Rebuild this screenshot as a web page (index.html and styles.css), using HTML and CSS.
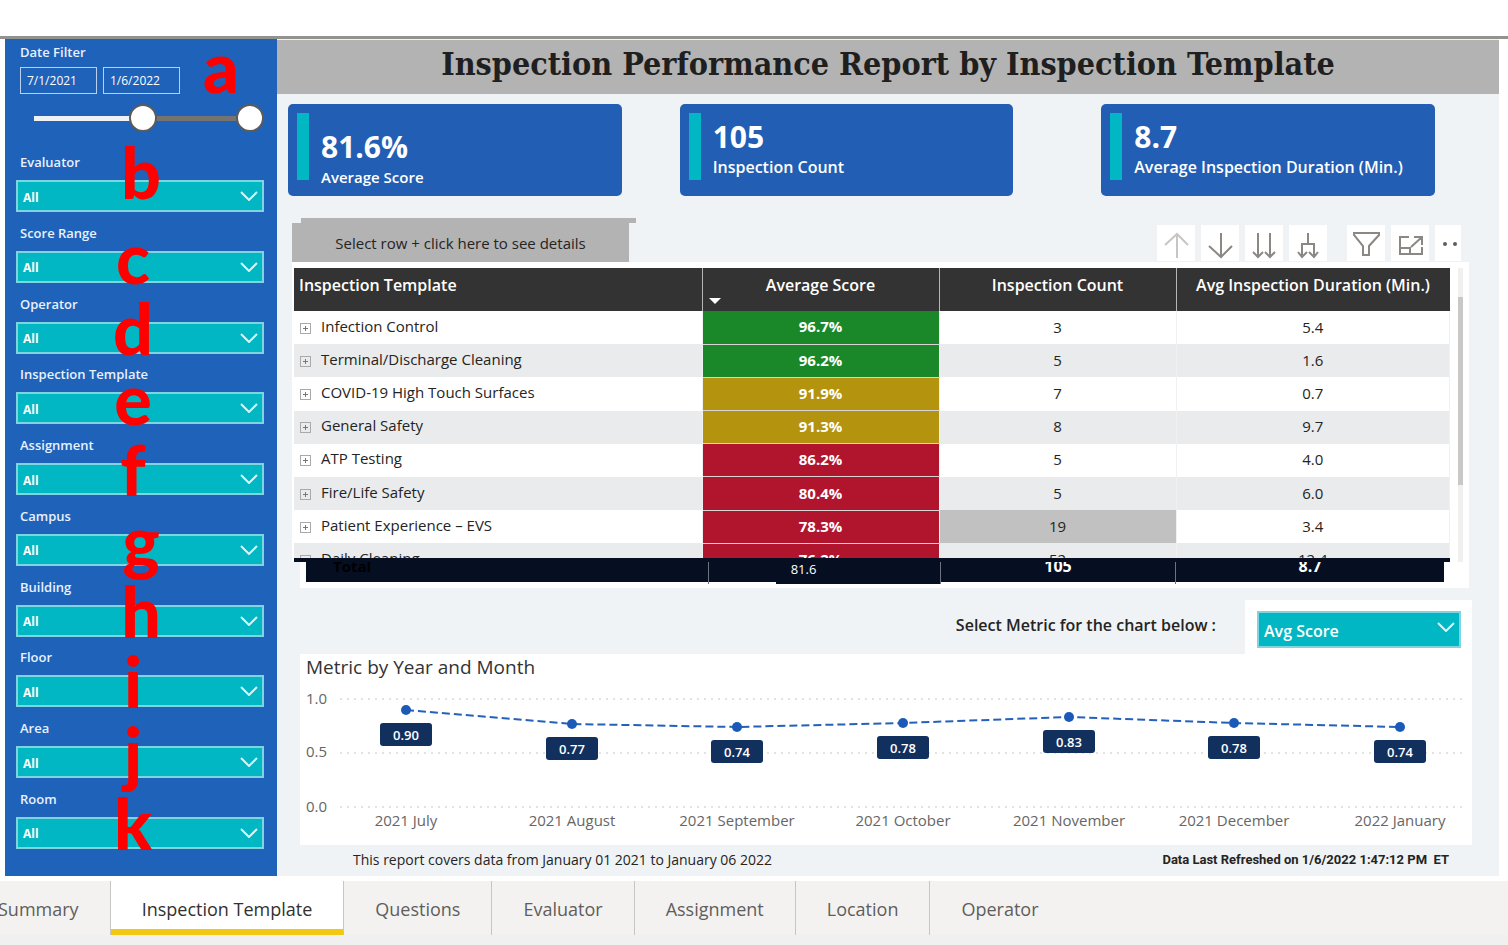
FILE: index.html
```html
<!DOCTYPE html>
<html lang="en">
<head>
  <meta charset="UTF-8" />
  <meta name="viewport" content="width=device-width, initial-scale=1.0" />
  <title>Inspection Performance Report</title>
  <link rel="stylesheet" href="styles.css">
</head>
<body>
  <div class="report">
    <aside class="sidebar">
      <div class="date-filter">
        <label class="filter-label" for="dateFrom">Date Filter</label>
        <div class="dates">
          <input type="text" id="dateFrom" value="7/1/2021" />
          <input type="text" id="dateTo" aria-label="End date" value="1/6/2022" />
        </div>
        <div class="slider">
          <div class="slider-line"></div>
          <input type="range" aria-label="Start of range" min="0" max="100" value="50" />
          <input type="range" aria-label="End of range" min="0" max="100" value="100" />
        </div>
        <span class="marker marker-date">a</span>
      </div>

      <div class="filters">
        <div class="filter">
          <label class="filter-label" for="evaluator">Evaluator</label>
          <div class="select">
            <select id="evaluator"><option>All</option></select>
            <svg class="chevron" viewBox="0 0 18 10"><path d="M1 1l8 8 8-8" /></svg>
          </div>
          <span class="marker marker-right marker-high">b</span>
        </div>
        <div class="filter">
          <label class="filter-label" for="scoreRange">Score Range</label>
          <div class="select">
            <select id="scoreRange"><option>All</option></select>
            <svg class="chevron" viewBox="0 0 18 10"><path d="M1 1l8 8 8-8" /></svg>
          </div>
          <span class="marker">c</span>
        </div>
        <div class="filter">
          <label class="filter-label" for="operator">Operator</label>
          <div class="select">
            <select id="operator"><option>All</option></select>
            <svg class="chevron" viewBox="0 0 18 10"><path d="M1 1l8 8 8-8" /></svg>
          </div>
          <span class="marker">d</span>
        </div>
        <div class="filter">
          <label class="filter-label" for="template">Inspection Template</label>
          <div class="select">
            <select id="template"><option>All</option></select>
            <svg class="chevron" viewBox="0 0 18 10"><path d="M1 1l8 8 8-8" /></svg>
          </div>
          <span class="marker">e</span>
        </div>
        <div class="filter">
          <label class="filter-label" for="assignment">Assignment</label>
          <div class="select">
            <select id="assignment"><option>All</option></select>
            <svg class="chevron" viewBox="0 0 18 10"><path d="M1 1l8 8 8-8" /></svg>
          </div>
          <span class="marker">f</span>
        </div>
        <div class="filter">
          <label class="filter-label" for="campus">Campus</label>
          <div class="select">
            <select id="campus"><option>All</option></select>
            <svg class="chevron" viewBox="0 0 18 10"><path d="M1 1l8 8 8-8" /></svg>
          </div>
          <span class="marker marker-right">g</span>
        </div>
        <div class="filter">
          <label class="filter-label" for="building">Building</label>
          <div class="select">
            <select id="building"><option>All</option></select>
            <svg class="chevron" viewBox="0 0 18 10"><path d="M1 1l8 8 8-8" /></svg>
          </div>
          <span class="marker marker-right">h</span>
        </div>
        <div class="filter">
          <label class="filter-label" for="floor">Floor</label>
          <div class="select">
            <select id="floor"><option>All</option></select>
            <svg class="chevron" viewBox="0 0 18 10"><path d="M1 1l8 8 8-8" /></svg>
          </div>
          <span class="marker">i</span>
        </div>
        <div class="filter">
          <label class="filter-label" for="area">Area</label>
          <div class="select">
            <select id="area"><option>All</option></select>
            <svg class="chevron" viewBox="0 0 18 10"><path d="M1 1l8 8 8-8" /></svg>
          </div>
          <span class="marker">j</span>
        </div>
        <div class="filter">
          <label class="filter-label" for="room">Room</label>
          <div class="select">
            <select id="room"><option>All</option></select>
            <svg class="chevron" viewBox="0 0 18 10"><path d="M1 1l8 8 8-8" /></svg>
          </div>
          <span class="marker">k</span>
        </div>
      </div>
    </aside>

    <main class="main">
      <h1>Inspection Performance Report by Inspection Template</h1>

      <div class="cards">
        <div class="card card-low">
          <strong>81.6%</strong>
          <span>Average Score</span>
        </div>
        <div class="card">
          <strong>105</strong>
          <span>Inspection Count</span>
        </div>
        <div class="card">
          <strong>8.7</strong>
          <span>Average Inspection Duration (Min.)</span>
        </div>
      </div>

      <div class="toolbar">
        <button class="details" type="button">Select row + click here to see details</button>
        <div class="tools">
          <button class="tool tool-off" type="button" aria-label="Drill up">
            <svg viewBox="0 0 38 36"><path d="M20 33V9M8 20L20 9l11 11" /></svg>
          </button>
          <button class="tool" type="button" aria-label="Drill down">
            <svg viewBox="0 0 38 36"><path d="M20 8v24M8 21l12 11 11-11" /></svg>
          </button>
          <button class="tool" type="button" aria-label="Next level">
            <svg viewBox="0 0 38 36"><path d="M13 8v24M8 27l5 5 5-5M25 8v24M20 27l5 5 5-5" /></svg>
          </button>
          <button class="tool" type="button" aria-label="Expand all">
            <svg viewBox="0 0 38 36"><path d="M19 8v11M13 32V19h12v13M9 27l4 5 5-5M20 27l5 5 4-5" /></svg>
          </button>
          <button class="tool tool-gap" type="button" aria-label="Filters">
            <svg viewBox="0 0 38 36"><path d="M7 8h25v2L22 21v9h-6v-9L7 10z" /></svg>
          </button>
          <button class="tool" type="button" aria-label="Focus mode">
            <svg viewBox="0 0 38 36"><path d="M18 12H9v17h22v-7M9 23h10v6M23 12h8v8M31 12L20 22" /></svg>
          </button>
          <button class="tool tool-cut" type="button" aria-label="More options">
            <svg viewBox="0 0 38 36"><circle cx="10" cy="19" r="2" /><circle cx="20" cy="19" r="2" /></svg>
          </button>
        </div>
      </div>

      <div class="matrix">
        <div class="matrix-scroll">
          <table>
            <thead>
              <tr>
                <th class="col-name">Inspection Template</th>
                <th class="col-score sorted">Average Score</th>
                <th class="col-count">Inspection Count</th>
                <th>Avg Inspection Duration (Min.)</th>
              </tr>
            </thead>
            <tbody>
              <tr><td><i class="plus"></i>Infection Control</td><td class="green">96.7%</td><td>3</td><td>5.4</td></tr>
              <tr><td><i class="plus"></i>Terminal/Discharge Cleaning</td><td class="green">96.2%</td><td>5</td><td>1.6</td></tr>
              <tr><td><i class="plus"></i>COVID-19 High Touch Surfaces</td><td class="amber">91.9%</td><td>7</td><td>0.7</td></tr>
              <tr><td><i class="plus"></i>General Safety</td><td class="amber">91.3%</td><td>8</td><td>9.7</td></tr>
              <tr><td><i class="plus"></i>ATP Testing</td><td class="red">86.2%</td><td>5</td><td>4.0</td></tr>
              <tr><td><i class="plus"></i>Fire/Life Safety</td><td class="red">80.4%</td><td>5</td><td>6.0</td></tr>
              <tr><td><i class="plus"></i>Patient Experience – EVS</td><td class="red">78.3%</td><td class="picked">19</td><td>3.4</td></tr>
              <tr><td><i class="plus"></i>Daily Cleaning</td><td class="red">76.2%</td><td>52</td><td>12.4</td></tr>
            </tbody>
          </table>
        </div>
        <div class="scrollbar"><div class="scroll-thumb"></div></div>
      </div>
      <div class="totals">
        <div class="totals-row">
          <span class="total-name">Total</span>
          <span class="total-score">81.6</span>
          <span class="total-value">105</span>
          <span class="total-value">8.7</span>
        </div>
      </div>

      <div class="metric">
        <label for="metric">Select Metric for the chart below :</label>
        <div class="metric-box">
          <div class="select">
            <select id="metric"><option>Avg Score</option></select>
            <svg class="chevron" viewBox="0 0 18 10"><path d="M1 1l8 8 8-8" /></svg>
          </div>
        </div>
      </div>

      <section class="chart">
        <svg viewBox="0 0 1172 191">
          <text class="chart-title" x="6" y="20">Metric by Year and Month</text>
          <g class="axis">
            <text x="6" y="50">1.0</text>
            <text x="6" y="103">0.5</text>
            <text x="6" y="158">0.0</text>
          </g>
          <path class="grid" d="M40 45H1163M40 99H1163M40 153H1163" />
          <path class="line" d="M106 56L272 70L437 73L603 69L769 63L934 69L1100 73" />
          <g class="dots">
            <circle cx="106" cy="56" r="5" />
            <circle cx="272" cy="70" r="5" />
            <circle cx="437" cy="73" r="5" />
            <circle cx="603" cy="69" r="5" />
            <circle cx="769" cy="63" r="5" />
            <circle cx="934" cy="69" r="5" />
            <circle cx="1100" cy="73" r="5" />
          </g>
          <g class="tags">
            <rect x="80" y="69" width="52" height="23" rx="3" />
            <rect x="246" y="83" width="52" height="23" rx="3" />
            <rect x="411" y="86" width="52" height="23" rx="3" />
            <rect x="577" y="82" width="52" height="23" rx="3" />
            <rect x="743" y="76" width="52" height="23" rx="3" />
            <rect x="908" y="82" width="52" height="23" rx="3" />
            <rect x="1074" y="86" width="52" height="23" rx="3" />
            <text x="106" y="86">0.90</text>
            <text x="272" y="100">0.77</text>
            <text x="437" y="103">0.74</text>
            <text x="603" y="99">0.78</text>
            <text x="769" y="93">0.83</text>
            <text x="934" y="99">0.78</text>
            <text x="1100" y="103">0.74</text>
          </g>
          <g class="months">
            <text x="106" y="172">2021 July</text>
            <text x="272" y="172">2021 August</text>
            <text x="437" y="172">2021 September</text>
            <text x="603" y="172">2021 October</text>
            <text x="769" y="172">2021 November</text>
            <text x="934" y="172">2021 December</text>
            <text x="1100" y="172">2022 January</text>
          </g>
        </svg>
      </section>

      <div class="notes">
        <span>This report covers data from January 01 2021 to January 06 2022</span>
        <strong>Data Last Refreshed on 1/6/2022 1:47:12 PM&nbsp; ET</strong>
      </div>
    </main>
  </div>

  <nav class="tabs">
    <a href="#">Summary</a>
    <a href="#" class="active">Inspection Template</a>
    <a href="#">Questions</a>
    <a href="#">Evaluator</a>
    <a href="#">Assignment</a>
    <a href="#">Location</a>
    <a href="#">Operator</a>
  </nav>
</body>
</html>
```

FILE: styles.css
```css
* {
  box-sizing: border-box;
}

body {
  margin: 0;
  min-height: 100vh;
  display: flex;
  flex-direction: column;
  padding-top: 36px;
  font-family: 'Open Sans', 'Noto Sans', sans-serif;
  font-size: 15px;
  color: #252423;
  background: #fff;
  overflow-x: hidden;
}

button, input, select {
  font-family: inherit;
}

.report {
  flex: 1;
  display: flex;
  border-top: 3px solid #92928e;
  padding: 0 9px 0 5px;
}

/* sidebar */
.sidebar {
  width: 272px;
  flex-shrink: 0;
  display: flex;
  flex-direction: column;
  padding: 2px 13px 27px 11px;
  background: #1f62ba;
}

.filter-label {
  display: block;
  padding-left: 4px;
  font-size: 13px;
  font-weight: 600;
  line-height: 22px;
  color: #e8f1fc;
}

.date-filter {
  position: relative;
  height: 110px;
}

.dates {
  display: flex;
  gap: 6px;
  padding: 4px 0 0 4px;
}

.dates input {
  width: 77px;
  height: 27px;
  padding: 0 6px;
  border: 1px solid #b9d0ee;
  background: transparent;
  color: #fff;
  font-size: 12px;
}

.slider {
  position: relative;
  height: 28px;
  margin: 10px 0 0 5px;
}

.slider-line {
  height: 28px;
  margin: 0 13px;
  background: linear-gradient(to right, #eef1f5 50%, #767371 50%) center / 100% 5px no-repeat;
}

.slider input {
  position: absolute;
  top: 0;
  left: 0;
  width: 100%;
  height: 28px;
  margin: 0;
  appearance: none;
  background: none;
  pointer-events: none;
}

.slider input::-webkit-slider-thumb {
  appearance: none;
  width: 28px;
  height: 28px;
  border: 2px solid #5d5b59;
  border-radius: 50%;
  background: #fff;
  pointer-events: auto;
}

.filters {
  flex: 1;
  display: flex;
  flex-direction: column;
  justify-content: space-between;
}

.filter {
  position: relative;
}

.filter .select {
  margin-top: 7px;
}

.select {
  position: relative;
}

.select select {
  display: block;
  width: 100%;
  height: 32px;
  padding: 2px 5px 0;
  appearance: none;
  border: 2px solid #7fd5df;
  border-radius: 0;
  background: #00b7c3;
  color: #fff;
  font-size: 12px;
  font-weight: 700;
}

.chevron {
  position: absolute;
  top: 11px;
  right: 6px;
  width: 18px;
  height: 10px;
  fill: none;
  stroke: #d9f5f7;
  stroke-width: 2;
  pointer-events: none;
}

/* red callout letters */
.marker {
  position: absolute;
  left: 97px;
  bottom: 6px;
  width: 40px;
  font-family: Lato, sans-serif;
  font-size: 70px;
  font-weight: 900;
  line-height: 40px;
  text-align: center;
  color: #f00;
  pointer-events: none;
}

.marker-right {
  left: 105px;
}

.marker-high {
  bottom: 20px;
}

.marker-date {
  left: 185px;
  bottom: 65px;
}

/* main area */
.main {
  flex: 1;
  min-width: 0;
  padding-top: 1px;
  background: #eff3f6;
}

h1 {
  margin: 0;
  font-family: Georgia, 'DejaVu Serif Condensed', 'Liberation Serif', serif;
  font-size: 32px;
  font-weight: 700;
  line-height: 48px;
  padding-bottom: 6px;
  text-align: center;
  color: #1f1f1f;
  background: #b3b3b3;
}

.cards {
  display: grid;
  grid-template-columns: 334fr 58fr 334fr 88fr 334fr;
  margin: 10px 64px 0 11px;
}

.card {
  display: flex;
  flex-direction: column;
  height: 92px;
  padding: 14px 0 0 33px;
  border-radius: 5px;
  color: #fff;
  background: linear-gradient(#00b7c3, #00b7c3) 9px 9px / 12px 67px no-repeat #225eb4;
}

.card:nth-child(2) {
  grid-column: 3;
}

.card:nth-child(3) {
  grid-column: 5;
}

.card-low {
  padding-top: 24px;
}

.card strong {
  font-size: 30px;
  line-height: 38px;
}

.card span {
  font-size: 16px;
  font-weight: 600;
  line-height: 22px;
}

.card-low span {
  font-size: 15px;
}

.toolbar {
  display: flex;
  justify-content: space-between;
  align-items: center;
  margin: 27px 38px 0 15px;
}

.details {
  position: relative;
  width: 337px;
  height: 39px;
  border: none;
  background: #b3b3b3;
  color: #252423;
  font-size: 15px;
}

.details::before {
  content: '';
  position: absolute;
  top: -5px;
  left: 9px;
  width: 335px;
  height: 5px;
  background: #b3b3b3;
}

.tools {
  display: flex;
  gap: 6px;
}

.tool {
  width: 38px;
  height: 36px;
  padding: 0;
  border: none;
  background: #fff;
  overflow: hidden;
}

.tool-gap {
  margin-left: 14px;
}

.tool-cut {
  width: 26px;
}

.tool svg {
  display: block;
  width: 38px;
  height: 36px;
  fill: none;
  stroke: #8a8785;
  stroke-width: 2;
}

.tool-off svg {
  stroke: #c8c6c4;
}

.tool circle {
  fill: #605e5c;
  stroke: none;
}

/* matrix */
.matrix {
  display: flex;
  justify-content: space-between;
  margin: 0 30px 0 15px;
  padding: 6px 6px 0 2px;
  background: #fff;
}

.matrix-scroll {
  flex: 1;
  height: 294px;
  overflow: hidden;
  border-bottom: 4px solid #060e22;
}

table {
  width: 100%;
  height: 309px;
  border-collapse: collapse;
  table-layout: fixed;
}

th {
  height: 43px;
  padding: 0 5px 10px;
  border-right: 1px solid #b5b5b5;
  background: #333;
  color: #fff;
  font-size: 16px;
  font-weight: 600;
  line-height: 20px;
}

th:last-child {
  border-right: none;
}

.col-name {
  width: 408px;
  text-align: left;
}

.col-score, .col-count {
  width: 237px;
}

.sorted {
  position: relative;
}

.sorted::after {
  content: '';
  position: absolute;
  left: 6px;
  bottom: 7px;
  border: 6px solid transparent;
  border-top-color: #fff;
  border-bottom: none;
}

td {
  padding: 0 0 2px;
  border-right: 1px solid #f1f1f1;
  line-height: 20px;
  text-align: center;
}

td:first-child {
  padding-left: 6px;
  padding-bottom: 4px;
  text-align: left;
}

tr:nth-child(even) td {
  background: #e9ebed;
}

tr td.green, tr td.amber, tr td.red {
  border-bottom: 1px solid #d9d5d5;
  color: #fff;
  font-weight: 700;
}

tr td.green {
  background: #1a8828;
}

tr td.amber {
  background: #b4940e;
}

tr td.red {
  background: #b1152e;
}

tr td.picked {
  background: #c1c1c1;
}

.plus {
  display: inline-block;
  width: 11px;
  height: 11px;
  margin-right: 10px;
  vertical-align: -2px;
  border: 1px solid #aaa;
  background:
    linear-gradient(#777, #777) center / 5px 1px no-repeat,
    linear-gradient(#777, #777) center / 1px 5px no-repeat;
}

.scrollbar {
  width: 5px;
  margin-left: 8px;
  padding-top: 29px;
  background: #f0f0f0;
}

.scroll-thumb {
  height: 188px;
  background: #c8c8c8;
}

.totals {
  margin: 0 30px 0 23px;
  padding: 0 25px 6px 6px;
  background: #fff;
}

.totals-row {
  display: grid;
  grid-template-columns: 402px 232px 235px 1fr;
  height: 20px;
  background: #060e22;
  color: #fff;
  line-height: 8px;
  text-align: center;
}

.totals-row span + span {
  border-left: 1px solid #6d727e;
}

.total-name {
  padding-left: 27px;
  overflow: hidden;
  font-size: 15px;
  font-weight: 700;
  text-align: left;
  color: #000;
}

.total-score {
  height: 22px;
  padding-right: 42px;
  font-size: 13px;
  line-height: 14px;
  background: linear-gradient(#060e22, #060e22) right / 164px 100% no-repeat;
}

.total-value {
  overflow: hidden;
  font-size: 16px;
  font-weight: 700;
}

/* metric picker and chart */
.metric {
  display: flex;
  justify-content: flex-end;
  gap: 29px;
  margin: 12px 27px 0 0;
  font-size: 16px;
  font-weight: 600;
  line-height: 50px;
}

.metric-box {
  width: 227px;
  height: 54px;
  padding: 11px 11px 0 12px;
  background: #fff;
}

.metric-box select {
  height: 37px;
  font-size: 16px;
  font-weight: 600;
}

.chart {
  margin: 0 27px 0 23px;
  background: #fff;
}

.chart svg {
  display: block;
  width: 100%;
}

.chart-title {
  font-size: 19px;
  fill: #333;
}

.axis, .months {
  font-size: 15px;
  fill: #666;
}

.months, .tags {
  text-anchor: middle;
}

.grid {
  stroke: #e2e2e2;
  stroke-width: 2;
  stroke-dasharray: 2 5;
}

.line {
  fill: none;
  stroke: #2461bb;
  stroke-width: 2;
  stroke-dasharray: 8 4;
}

.dots {
  fill: #1c5ab8;
}

.tags rect {
  fill: #12305e;
}

.tags text {
  font-size: 13px;
  font-weight: 600;
  fill: #fff;
}

.notes {
  display: flex;
  justify-content: space-between;
  padding: 5px 50px 6px 76px;
  font-size: 14px;
  line-height: 20px;
}

.notes strong {
  font-family: Roboto, sans-serif;
  font-size: 13px;
}

/* page tabs */
.tabs {
  display: flex;
  margin-top: 5px;
  padding-bottom: 10px;
  background: linear-gradient(#f3f2f1 54px, #f0f0f0 54px);
}

.tabs a {
  height: 54px;
  padding: 0 31px;
  border-right: 1px solid #c8c6c4;
  font-size: 18px;
  line-height: 56px;
  text-decoration: none;
  color: #605e5c;
}

.tabs a:first-child {
  margin-left: -33px;
}

.tabs a:last-child {
  border-right: none;
}

.tabs .active {
  border-bottom: 6px solid #f2c811;
  background: #fff;
  color: #323130;
  font-weight: 500;
}
```
